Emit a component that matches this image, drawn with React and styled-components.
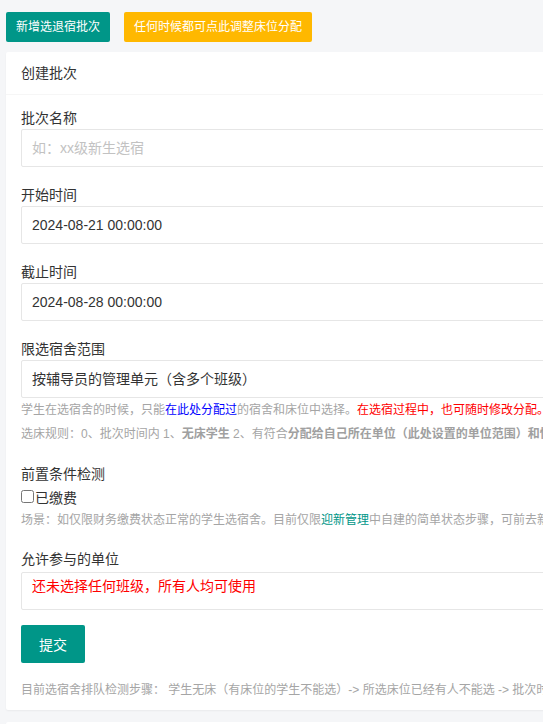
import React from 'react';
import styled, { createGlobalStyle } from 'styled-components';

const GlobalStyle = createGlobalStyle`
  html, body {
    margin: 0;
    padding: 0;
    background: #f5f6f8;
    overflow: hidden;
  }
  body {
    font-family: "Liberation Sans", "Noto Sans CJK SC", sans-serif;
    color: #333;
  }
`;

const Page = styled.div`
  padding: 12px 6px 0;
  width: 1000px;
`;

const Toolbar = styled.div`
  display: flex;
  gap: 14px;
  height: 30px;
`;

const TopButton = styled.button`
  height: 30px;
  padding: 0 10px;
  border: none;
  border-radius: 2px;
  background: ${props => props.$bg};
  color: #fff;
  font-family: inherit;
  font-size: 12px;
  line-height: 30px;
  white-space: nowrap;
  cursor: pointer;
`;

const Card = styled.div`
  margin-top: ${props => props.$gap}px;
  background: #fff;
  border-radius: 2px;
  box-shadow: 0 1px 2px rgba(0, 0, 0, 0.05);
`;

const CardHeader = styled.div`
  height: 42px;
  line-height: 42px;
  padding: 0 15px;
  border-bottom: 1px solid #f6f6f6;
  font-size: 14px;
  color: #333;
`;

const CardBody = styled.div`
  padding: 12px 15px 8px;
  min-height: ${props => props.$minHeight || 0}px;
`;

const FormItem = styled.div`
  margin-top: ${props => props.$top ?? 17}px;
`;

const Label = styled.div`
  font-size: 14px;
  line-height: 22px;
  color: #333;
`;

const Field = styled.div`
  box-sizing: border-box;
  height: 38px;
  margin-top: ${props => props.$top || 0}px;
  padding: 0 10px;
  border: 1px solid #e6e6e6;
  border-radius: 2px;
  background: #fff;
  font-size: 14px;
  line-height: 36px;
  color: ${props => props.$muted ? '#c2c2c2' : '#333'};
  white-space: nowrap;
`;

const NoticeBox = styled(Field)`
  line-height: 26px;
  color: #ff0000;
`;

const Help = styled.div`
  font-size: 12px;
  line-height: 24px;
  color: #a5a5a5;
  white-space: nowrap;
`;

const Strong = styled.b`
  font-weight: bold;
  color: #a0a0a0;
`;

const Tint = styled.span`
  color: ${props => props.$color};
`;

const CheckRow = styled.label`
  display: flex;
  align-items: center;
  height: 23px;
  font-size: 14px;
  color: #333;
`;

const Checkbox = styled.input`
  width: 13px;
  height: 13px;
  margin: 0 1px 0 0;
`;

const Submit = styled.button`
  display: block;
  height: 38px;
  margin-top: 15px;
  padding: 0 18px;
  border: none;
  border-radius: 2px;
  background: #009688;
  color: #fff;
  font-family: inherit;
  font-size: 14px;
  cursor: pointer;
`;

const Footnote = styled(Help)`
  margin-top: 15px;
`;

export default function App() {
  return (
    <>
      <GlobalStyle />
      <Page>
        <Toolbar>
          <TopButton $bg="#009688">新增选退宿批次</TopButton>
          <TopButton $bg="#ffb800">任何时候都可点此调整床位分配</TopButton>
        </Toolbar>

        <Card $gap={10}>
          <CardHeader>创建批次</CardHeader>
          <CardBody>
            <FormItem $top={0}>
              <Label>批次名称</Label>
              <Field $muted>如：xx级新生选宿</Field>
            </FormItem>

            <FormItem>
              <Label>开始时间</Label>
              <Field>2024-08-21 00:00:00</Field>
            </FormItem>

            <FormItem>
              <Label>截止时间</Label>
              <Field>2024-08-28 00:00:00</Field>
            </FormItem>

            <FormItem>
              <Label>限选宿舍范围</Label>
              <Field>按辅导员的管理单元（含多个班级）</Field>
              <Help>
                学生在选宿舍的时候，只能<Tint $color="#0000ff">在此处分配过</Tint>的宿舍和床位中选择。
                <Tint $color="#ff0000">在选宿过程中，也可随时修改分配。</Tint>
              </Help>
              <Help>
                选床规则：0、批次时间内 1、<Strong>无床学生</Strong> 2、有符合
                <Strong>分配给自己所在单位（此处设置的单位范围）和性别一致的空床位</Strong>
              </Help>
            </FormItem>

            <FormItem>
              <Label>前置条件检测</Label>
              <CheckRow>
                <Checkbox type="checkbox" />
                已缴费
              </CheckRow>
              <Help>
                场景：如仅限财务缴费状态正常的学生选宿舍。目前仅限<Tint $color="#009688">迎新管理</Tint>
                中自建的简单状态步骤，可前去新增状态步骤。
              </Help>
            </FormItem>

            <FormItem $top={16}>
              <Label>允许参与的单位</Label>
              <NoticeBox $top={2}>还未选择任何班级，所有人均可使用</NoticeBox>
            </FormItem>

            <Submit>提交</Submit>

            <Footnote>
              目前选宿舍排队检测步骤： 学生无床（有床位的学生不能选）-&gt; 所选床位已经有人不能选 -&gt; 批次时间不在范围内不能选
            </Footnote>
          </CardBody>
        </Card>

        <Card $gap={12}>
          <CardBody $minHeight={60} />
        </Card>
      </Page>
    </>
  );
}
